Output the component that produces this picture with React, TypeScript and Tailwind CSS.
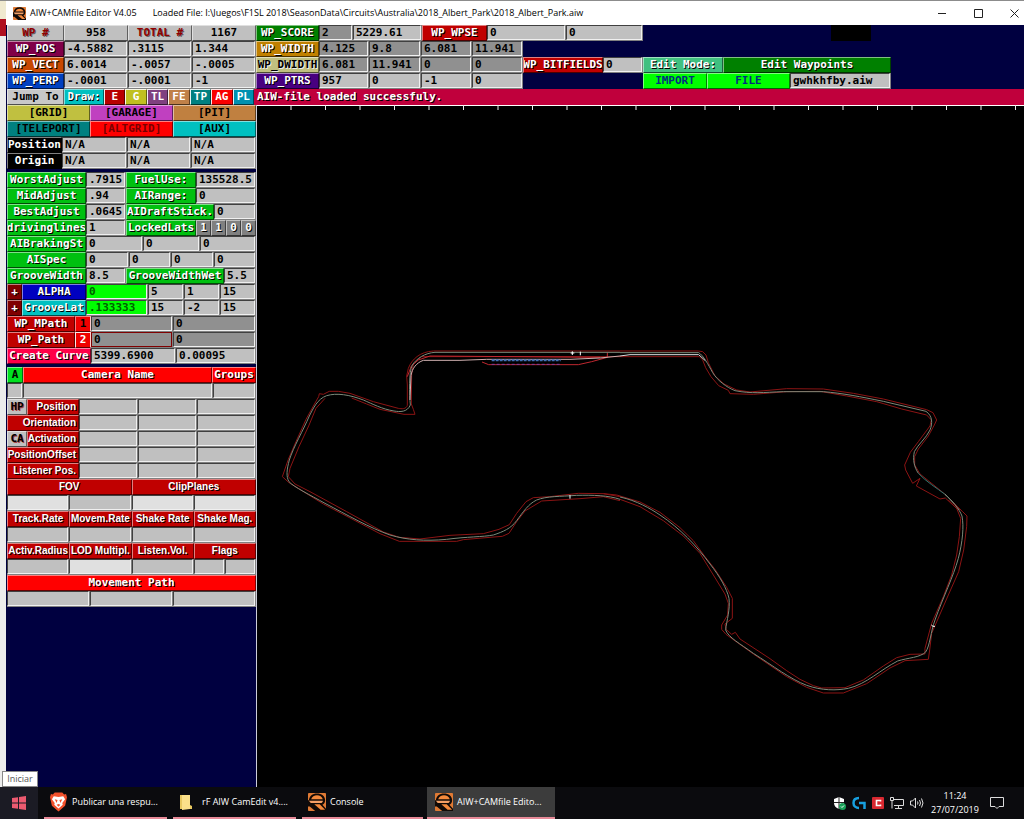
import { useId } from "react";
import { clsx } from "clsx";

const mono = "font-['DejaVu_Sans_Mono','Liberation_Mono',monospace] text-[11px] leading-[14px] font-bold";
const system = "font-['Open_Sans','Noto_Sans',sans-serif] text-[9px]";
const shadow = "[text-shadow:1px_1px_0_#000]";

type FieldProps = { w: string; value?: string; name: string; id?: string; tone?: string };

function Field({ w, value = "", name, id, tone = "bg-[#c0c0c0] text-black" }: FieldProps) {
  return (
    <div className={clsx(w, "h-4 shrink-0 bg-[#808080] pb-px pr-px")}>
      <input
        id={id}
        aria-label={name}
        defaultValue={value}
        className={clsx(
          mono,
          tone,
          "block h-[15px] w-full min-w-0 border border-t-[#404040] border-l-[#404040] border-r-[#f0f0f0] border-b-[#f0f0f0] pl-[2px] outline-none"
        )}
      />
    </div>
  );
}

const tagBase =
  "flex h-4 shrink-0 items-center justify-center overflow-hidden whitespace-nowrap border border-t-white/50 border-l-white/50 border-r-black/50 border-b-black/60";

function Tag({ className, children, htmlFor }: { className: string; children?: string; htmlFor?: string }) {
  return (
    <label htmlFor={htmlFor} className={clsx(tagBase, className)}>
      {children}
    </label>
  );
}

function Btn({ className, children, label }: { className: string; children?: string; label?: string }) {
  return (
    <button type="button" aria-label={label} className={clsx(tagBase, className)}>
      {children}
    </button>
  );
}

type Cell = { w: string; value?: string; tone?: string };

// a caption followed by its value boxes
function Values({ name, tag, cells }: { name: string; tag: string; cells: Cell[] }) {
  const id = useId();
  return (
    <>
      <Tag className={tag} htmlFor={id}>
        {name}
      </Tag>
      {cells.map((c, i) => (
        <Field key={i} id={i === 0 ? id : undefined} name={i === 0 ? name : `${name} ${i + 1}`} {...c} />
      ))}
    </>
  );
}

function Row({ children }: { children: React.ReactNode }) {
  return <div className="flex h-4">{children}</div>;
}

const white = `text-white ${shadow}`;
const green = `bg-[#00c010] ${white}`;
const red = `bg-[#c00000] ${white}`;
const dark = "bg-[#909090] text-black";
const lime = "bg-[#00ff00] text-[#006000]";
const arial = "font-['Liberation_Sans',sans-serif] text-[10px] leading-[14px] font-bold";

function Logo({ className }: { className: string }) {
  return (
    <svg viewBox="0 0 20 20" className={className} aria-hidden="true">
      <rect width="20" height="20" rx="1" fill="#e07a34" />
      <path d="M10 .5c5 0 9 3 9 7.500 0 2.500-1 4-3 5l4 4.500V20H8L2 15H0V8h1C1.500 3.500 5 .5 10 .5z" fill="#120a06" />
      <path d="M3.500 7C4.500 4 7 2.500 10 2.500S15.500 4 16.500 7z" fill="#f58a3c" />
      <path d="M1 8.500h15.500c0 1.200-.5 2-1.500 2.500H3z" fill="#f5a066" />
      <path d="M7 12.500h6l6 6h-5z" fill="#f58a3c" />
    </svg>
  );
}

function TitleBar() {
  const btn = "flex h-6 w-9 items-center justify-center";
  return (
    <header className={clsx(system, "flex h-[25px] items-center border-t border-[#8c8c8c] bg-white pl-[7px] text-black")}>
      <Logo className="h-[13px] w-[13px]" />
      <h1 className="ml-1 whitespace-nowrap">AIW+CAMfile Editor V4.05</h1>
      <span className="ml-4 flex-1 truncate">
        Loaded File: I:\Juegos\F1SL 2018\SeasonData\Circuits\Australia\2018_Albert_Park\2018_Albert_Park.aiw
      </span>
      <div className="-mr-2 flex">
        <button type="button" aria-label="Minimize" className={btn}>
          <svg width="9" height="9" stroke="#222" fill="none"><path d="M0 4.500h8" /></svg>
        </button>
        <button type="button" aria-label="Maximize" className={btn}>
          <svg width="9" height="9" stroke="#222" fill="none"><path d="M.5.5h8v8h-8z" /></svg>
        </button>
        <button type="button" aria-label="Close" className={btn}>
          <svg width="9" height="9" stroke="#222" fill="none"><path d="M.5.5l8 8m0-8l-8 8" /></svg>
        </button>
      </div>
    </header>
  );
}

const layers = [
  { name: "E", tone: "bg-[#b80000]" },
  { name: "G", tone: "bg-[#c0c020]" },
  { name: "TL", tone: "bg-[#804080]" },
  { name: "FE", tone: "bg-[#c08048]" },
  { name: "TP", tone: "bg-[#008080]" },
  { name: "AG", tone: "bg-[#f80000]" },
  { name: "PL", tone: "bg-[#0090b0]" },
];

function Toolbar() {
  const w3 = (a: string, b: string, c: string) => [
    { w: "w-16", value: a },
    { w: "w-16", value: b },
    { w: "w-16", value: c },
  ];
  const w4 = (tone: string | undefined, vals: string[]) =>
    vals.map((value, i) => ({ w: i === 0 ? "w-[50px]" : i === 1 ? "w-[52px]" : "w-[51px]", value, tone }));
  return (
    <section aria-label="Waypoint" className={clsx(mono, "overflow-hidden bg-[#000040] pl-px")}>
      <Row>
        <Tag className="w-[57px] bg-[#c0c0c0] text-[#900000] [text-shadow:1px_1px_0_#666]">WP #</Tag>
        <output aria-label="Waypoint number" className={clsx(tagBase, "w-16 bg-[#c0c0c0] text-black")}>958</output>
        <Tag className="w-16 bg-[#c0c0c0] text-[#900000] [text-shadow:1px_1px_0_#666]">TOTAL #</Tag>
        <output aria-label="Total" className={clsx(tagBase, "w-16 bg-[#c0c0c0] text-black")}>1167</output>
        <Values name="WP_SCORE" tag={`w-[63px] bg-[#008000] ${white}`} cells={[{ w: "w-[34px]", value: "2", tone: dark }, { w: "w-[69px]", value: "5229.61" }]} />
        <Values name="WP_WPSE" tag={`w-[65px] ${red}`} cells={[{ w: "w-[79px]", value: "0" }, { w: "w-[77px]", value: "0" }]} />
        <div className="ml-[188px] h-4 w-10 bg-black" />
      </Row>
      <Row>
        <Values name="WP_POS" tag={`w-[57px] bg-[#800048] ${white}`} cells={w3("-4.5882", ".3115", "1.344")} />
        <Values name="WP_WIDTH" tag={`w-[63px] bg-[#c08000] ${white}`} cells={w4(dark, ["4.125", "9.8", "6.081", "11.941"])} />
      </Row>
      <Row>
        <Values name="WP_VECT" tag={`w-[57px] bg-[#c84800] ${white}`} cells={w3("6.0014", "-.0057", "-.0005")} />
        <Values name="WP_DWIDTH" tag="w-[63px] bg-[#c0c080] text-black [text-shadow:1px_1px_0_#eee]" cells={w4(dark, ["6.081", "11.941", "0", "0"])} />
        <Values name="WP_BITFIELDS" tag={`w-20 ${red}`} cells={[{ w: "w-10", value: "0" }]} />
        <Tag className={`w-20 bg-[#40c080] ${white}`}>Edit Mode:</Tag>
        <Btn className={`w-[168px] bg-[#008000] ${white}`}>Edit Waypoints</Btn>
      </Row>
      <Row>
        <Values name="WP_PERP" tag={`w-[57px] bg-[#0040c0] ${white}`} cells={w3("-.0001", "-.0001", "-1")} />
        <Values name="WP_PTRS" tag={`w-[63px] bg-[#480080] ${white}`} cells={w4(undefined, ["957", "0", "-1", "0"])} />
        <div className="w-[120px] shrink-0" />
        <Btn className="w-16 bg-[#00ff00] text-[#003080]">IMPORT</Btn>
        <Btn className="w-[83px] bg-[#00ff00] text-[#003080]">FILE</Btn>
        <Field w="w-[101px]" name="Import file name" value="gwhkhfby.aiw" />
      </Row>
      <Row>
        <Btn className="w-[57px] bg-[#c8c8c8] text-black">Jump To</Btn>
        <Tag className={`w-10 bg-[#00c0c0] ${white}`}>Draw:</Tag>
        <div className="grid w-[150px] grid-cols-7">
          {layers.map((l) => (
            <Btn key={l.name} className={clsx("border-t-white/90 border-l-white/90 text-white", l.tone)}>
              {l.name}
            </Btn>
          ))}
        </div>
        <p role="status" className={clsx("flex flex-1 items-center bg-[#c0003c] pl-[3px]", white)}>
          AIW-file loaded successfuly.
        </p>
      </Row>
    </section>
  );
}

const views = [
  { name: "[GRID]", tone: "bg-[#c0c040]" },
  { name: "[GARAGE]", tone: "bg-[#c040c0]" },
  { name: "[PIT]", tone: "bg-[#c08040]" },
  { name: "[TELEPORT]", tone: "bg-[#008080]" },
  { name: "[ALTGRID]", tone: "bg-[#ff0000] text-[#780000]" },
  { name: "[AUX]", tone: "bg-[#00c0c0]" },
];

const thirds = (value = ""): Cell[] => [
  { w: "w-[65px]", value },
  { w: "w-16", value },
  { w: "w-[65px]", value },
];

const fourths = (...tones: string[]) => (
  <div className="grid h-4 grid-cols-4">
    {tones.map((tone, i) => (
      <Field key={i} w="w-full" name={`Camera value ${i + 1}`} tone={tone} />
    ))}
  </div>
);

const light = "bg-[#e0e0e0]";
const mid = "bg-[#c0c0c0]";

function Captions({ names }: { names: string[] }) {
  return (
    <div className={clsx("grid h-4", names.length === 2 ? "grid-cols-2" : "grid-cols-4", arial)}>
      {names.map((n) => (
        <Tag key={n} className={red}>
          {n}
        </Tag>
      ))}
    </div>
  );
}

function CameraRow({ name, button }: { name: string; button?: string }) {
  return (
    <Row>
      {button && <Btn className="w-5 bg-[#c0c0c0] text-black [text-shadow:1px_1px_0_#a44]">{button}</Btn>}
      <Values
        name={name}
        tag={clsx(arial, red, button ? "w-[52px]" : "w-[72px]", "justify-end! pr-[2px]")}
        cells={[{ w: "w-[59px]" }, { w: "w-[59px]" }, { w: "w-[59px]" }]}
      />
    </Row>
  );
}

function Sidebar() {
  const left = `w-[79px] ${green}`;
  return (
    <aside className={clsx(mono, "w-[251px] shrink-0 border-r border-white/80 bg-[#000040] pl-px")}>
      <div className="grid grid-cols-3">
        {views.map((v) => (
          <Btn key={v.name} className={v.tone}>
            {v.name}
          </Btn>
        ))}
      </div>
      <Row><Values name="Position" tag={`w-[55px] bg-black ${white}`} cells={thirds("N/A")} /></Row>
      <Row><Values name="Origin" tag={`w-[55px] bg-black ${white}`} cells={thirds("N/A")} /></Row>

      <div className="pt-[3px]">
        <Row>
          <Values name="WorstAdjust" tag={left} cells={[{ w: "w-10", value: ".7915" }]} />
          <Values name="FuelUse:" tag={`w-[70px] ${green}`} cells={[{ w: "w-[60px]", value: "135528.5" }]} />
        </Row>
        <Row>
          <Values name="MidAdjust" tag={left} cells={[{ w: "w-10", value: ".94" }]} />
          <Values name="AIRange:" tag={`w-[70px] ${green}`} cells={[{ w: "w-[60px]", value: "0" }]} />
        </Row>
        <Row>
          <Values name="BestAdjust" tag={left} cells={[{ w: "w-10", value: ".0645" }]} />
          <Values name="AIDraftStick." tag={`w-[88px] ${green}`} cells={[{ w: "w-[42px]", value: "0" }]} />
        </Row>
        <Row>
          <Values name="drivinglines" tag={left} cells={[{ w: "w-10", value: "1" }]} />
          <Tag className={`w-[70px] ${green}`}>LockedLats</Tag>
          {["1", "1", "0", "0"].map((v, i) => (
            <Btn key={i} label={`Locked lat ${i + 1}: ${v}`} className={`w-[15px] bg-[#808080] ${white}`}>
              {v}
            </Btn>
          ))}
        </Row>
        <Row><Values name="AIBrakingSt" tag={left} cells={[{ w: "w-[57px]", value: "0" }, { w: "w-[57px]", value: "0" }, { w: "w-14", value: "0" }]} /></Row>
        <Row><Values name="AISpec" tag={left} cells={[{ w: "w-[43px]", value: "0" }, { w: "w-[42px]", value: "0" }, { w: "w-[43px]", value: "0" }, { w: "w-[42px]", value: "0" }]} /></Row>
        <Row>
          <Values name="GrooveWidth" tag={left} cells={[{ w: "w-10", value: "8.5" }]} />
          <Values name="GrooveWidthWet" tag={`w-[98px] ${green}`} cells={[{ w: "w-8", value: "5.5" }]} />
        </Row>
        <Row>
          <Btn label="Increase alpha" className={`w-[15px] bg-[#800000] ${white}`}>+</Btn>
          <Values name="ALPHA" tag={`w-16 bg-[#0000c0] ${white}`} cells={[{ w: "w-[62px]", value: "0", tone: lime }, { w: "w-9", value: "5" }, { w: "w-9", value: "1" }, { w: "w-9", value: "15" }]} />
        </Row>
        <Row>
          <Btn label="Increase groove" className={`w-[15px] bg-[#800000] ${white}`}>+</Btn>
          <Values name="GrooveLat" tag={`w-16 bg-[#00c0c0] ${white}`} cells={[{ w: "w-[62px]", value: ".133333", tone: lime }, { w: "w-9", value: "15" }, { w: "w-9", value: "-2" }, { w: "w-9", value: "15" }]} />
        </Row>
        {["WP_MPath", "WP_Path"].map((n, i) => (
          <Row key={n}>
            <Tag className={`w-[68px] ${red}`} htmlFor={n}>{n}</Tag>
            <Btn label={`${n} ${i + 1}`} className={clsx("w-4 border-r-white/80 bg-[#f00000]", i === 0 ? "text-black" : "border-l-white/90 border-t-white/90 text-white")}>{`${i + 1}`}</Btn>
            <Field w="w-[82px]" id={n} name={n} value="0" tone={i === 0 ? dark : "bg-[#909090] text-black border-[#800000]!"} />
            <Field w="w-[83px]" name={`${n} end`} value="0" tone={dark} />
          </Row>
        ))}
        <Row>
          <Btn className={`w-[84px] bg-[#ff0048] ${white}`}>Create Curve</Btn>
          <Field w="w-[85px]" name="Curve length" value="5399.6900" />
          <Field w="w-20" name="Curve step" value="0.00095" />
        </Row>
      </div>

      <div className="pt-[3px]">
        <Row>
          <Btn label="Add camera" className="w-4 bg-[#00e020] text-black">A</Btn>
          <Tag className={`w-[189px] bg-[#ff0000] ${white}`} htmlFor="camera-name">Camera Name</Tag>
          <Tag className={`w-11 bg-[#ff0000] ${white}`} htmlFor="camera-groups">Groups</Tag>
        </Row>
        <Row>
          <Field w="w-4" name="Camera index" />
          <Field w="w-[190px]" id="camera-name" name="Camera Name" />
          <Field w="w-[43px]" id="camera-groups" name="Groups" />
        </Row>
        <CameraRow name="Position" button="HP" />
        <CameraRow name="Orientation" />
        <CameraRow name="Activation" button="CA" />
        <CameraRow name="PositionOffset" />
        <CameraRow name="Listener Pos." />
        <Captions names={["FOV", "ClipPlanes"]} />
        {fourths(light, mid, light, light)}
        <Captions names={["Track.Rate", "Movem.Rate", "Shake Rate", "Shake Mag."]} />
        {fourths(mid, mid, mid, mid)}
        <Captions names={["Activ.Radius", "LOD Multipl.", "Listen.Vol.", "Flags"]} />
        <div className="grid h-4 grid-cols-8">
          <Field w="col-span-2" name="Activ.Radius" />
          <Field w="col-span-2" name="LOD Multipl." tone={light} />
          <Field w="col-span-2" name="Listen.Vol." />
          <Field w="w-full" name="Flags" />
          <Field w="w-full" name="Flags 2" />
        </div>
        <Tag className={`bg-[#ff0000] ${white}`}>Movement Path</Tag>
        <div className="grid h-4 grid-cols-3">
          <Field w="w-full" name="Path x" />
          <Field w="w-full" name="Path y" />
          <Field w="w-full" name="Path z" />
        </div>
      </div>
    </aside>
  );
}

const line = "[&_path]:[vector-effect:non-scaling-stroke]";

function TrackMap() {
  const ticks = Array.from({ length: 22 }, (_, i) => 291 + i * 34.5);
  return (
    <main className="min-w-0 flex-1 bg-black">
      <svg viewBox="257 105 767 682" className={clsx("block w-full", line)} fill="none" role="img" aria-label="Track map">
        <path d="M257 105h767" stroke="#fff" strokeWidth="2" />
        {ticks.map((x) => (
          <path key={x} d={`M${x} 105v5`} stroke="#eee" />
        ))}

        {/* west side, drawn at three units per pixel */}
        <g transform="translate(270 330) scale(.33333)" strokeLinejoin="round">
          <g stroke="#8c1414">
            <path d="M1050 63H490C450 65 425 88 415 115L410 138 412 165V226C408 238 395 237 385 235L310 215 240 190 205 184H178L160 193 148 191 146 200 130 228 108 268 78 335 55 388 37 440 57 458 160 522 330 611 388 634H560L580 629 660 622 697 619 717 610 740 575 765 543 815 513 930 506 1000 500 1050 512" />
            <path d="M1050 80H455L430 102 425 132 424 222 430 238 435 253H402L330 238 290 222 245 204M165 205L138 235 116 288 87 350 60 415 55 440 75 462 120 485 230 545 340 606 388 622 450 627 540 616 640 611 687 598 718 584 740 550 768 515 790 503 840 500 925 490 1000 491 1050 500" />
            <path d="M412 140L424 108 445 90 480 78 990 82M636 96L656 104 925 104 965 95 1012 82V67" stroke="#c02830" />
          </g>
          <path d="M1050 67H495C465 69 440 85 427 105 416 125 418 195 421 225 412 247 390 246 372 243 335 237 308 222 280 210 238 194 200 188 170 197 142 207 130 235 118 258 100 300 70 352 58 390 50 420 48 440 57 455 70 470 120 495 165 520 230 554 300 594 360 615 410 630 465 634 530 628 590 620 640 621 670 615 700 605 722 596 740 572 760 545 775 522 800 510 830 498 870 500 920 496 970 495 1015 496 1050 508" stroke="#7c8a7a" />
          <path d="M1050 78L990 84 900 88H650L570 91H460C440 98 426 115 423 137L420 210" stroke="#d0b0b0" />
          <path d="M665 91H872" stroke="#4070b8" strokeWidth="2" strokeDasharray="3 1" />
          <path d="M665 103H872" stroke="#8040a0" strokeDasharray="3 2" />
          <path d="M902 69h11M907 64v11M931 65v11M900 495v11" stroke="#fff" />
        </g>

        {/* north-east side */}
        <g transform="translate(600 330) scale(.33333)" strokeLinejoin="round">
          <g stroke="#8c1414">
            <path d="M60 63H295L308 65 318 75 325 98 345 138 372 162 410 180 450 186 560 176 670 177 760 190 850 207 980 239 999 248 1010 270 1003 285 985 318 955 357 944 380V405L960 432 1038 495 1082 540" />
            <path d="M60 80H298L308 90 317 113 333 140 356 167 385 181 390 191 460 193 560 185 660 184 740 198 830 215 905 237 980 255 994 270 990 288 955 335 931 367 914 405 917 420 938 460 960 445 949 468 1020 507 1036 504 1075 540" />
          </g>
          <path d="M60 68H296C310 76 325 104 338 128 354 153 380 172 405 182 455 192 490 187 550 185H670C730 190 780 200 850 214L978 244C998 258 998 280 990 300 978 325 955 342 943 365 938 390 942 410 955 430" stroke="#7c8a7a" />
          <path d="M60 78L90 74H296L316 92" stroke="#dddddd" />
          <path d="M955 430C980 456 1010 474 1035 493" stroke="#307870" />
          <path d="M1035 493C1052 508 1065 525 1078 540" stroke="#7c8a7a" />
        </g>

        {/* south-east side */}
        <g transform="translate(600 480) scale(.33333)" strokeLinejoin="round">
          <g stroke="#8c1414">
            <path d="M10 41L50 45 120 66 180 97 240 143 280 182 315 230 345 268 380 322 397 355V415L375 432 378 448 395 463 406 457 420 477 510 536 560 572 600 598 640 617 665 624 735 623 790 600 850 558 890 533 930 523 975 522 975 505 995 430 1030 350 1055 285 1070 225 1078 170 1082 115 1070 85 1045 60" />
            <path d="M60 58L120 80 190 122 250 168 300 220 340 285 375 342 385 370 383 405 365 435V448L378 463 460 522 560 590 620 622 670 639H730L800 611 870 564 915 542 985 538 989 510 995 460 1045 345 1076 275 1091 210 1100 140 1101 108 1088 95 1060 70" />
          </g>
          <path d="M60 51C110 62 150 85 180 105 240 145 290 198 330 252 360 290 380 325 387 355 391 390 380 420 377 450 385 472 420 491 460 520 520 558 570 597 620 616 665 632 710 632 745 625 800 612 840 570 893 543 925 533 960 533 977 516 990 497 992 455 1005 420 1030 350 1060 290 1075 235 1088 185 1092 140 1086 108 1077 85 1057 63 1035 43" stroke="#7c8a7a" />
          <path d="M994 435l5 4h6" stroke="#fff" />
        </g>
      </svg>
    </main>
  );
}

function Brave() {
  return (
    <svg viewBox="0 0 18 20" className="h-5 w-[17px]" aria-hidden="true">
      <path d="M5 0h8l2 2 2-.5L18 5l-2 9-7 6-7-6L0 5l1-3.500L3 2z" fill="#f2512c" />
      <path d="M4 4l5 .8L14 4l2 3-3 4 .5 2L9 17l-4.500-4L5 11 2 7z" fill="#fff" />
      <path d="M5 7l3 1-1 3zM13 7l-3 1 1 3zM7 13l2-1 2 1-2 2z" fill="#f2512c" />
    </svg>
  );
}

function Folder() {
  return (
    <svg viewBox="0 0 12 16" className="h-4 w-3" aria-hidden="true">
      <path d="M0 1h10v10l2 1v3H0z" fill="#e8c860" />
      <path d="M2 1h8v14l-8 1z" fill="#fbe08a" />
    </svg>
  );
}

const tasks = [
  { name: "Publicar una respu...", icon: <Brave />, box: "ml-1.5 w-[123px] pl-1.5" },
  { name: "rF AIW CamEdit v4....", icon: <Folder />, box: "ml-1.5 w-[123px] pl-[7px]" },
  { name: "Console", icon: <Logo className="h-[18px] w-[18px]" />, box: "ml-1.5 w-[121px] pl-1.5" },
  { name: "AIW+CAMfile Edito...", icon: <Logo className="h-[18px] w-[18px]" />, box: "ml-1 w-32 pl-2 bg-[#3c3c3c]" },
];

function Taskbar() {
  return (
    <footer className={clsx(system, "relative flex h-8 bg-[#0b0b0e] text-white")}>
      <div role="tooltip" className="absolute -top-4 left-0.5 flex h-4 w-9 items-center justify-center border border-[#888] bg-white text-[#555]">
        Iniciar
      </div>
      <button type="button" aria-label="Iniciar" className="flex w-[38px] items-center justify-center bg-[#1b1b24]">
        <svg viewBox="0 0 14 14" className="h-3.5 w-3.5" fill="#ec5a70">
          <path d="M0 2l6-.8v5.300H0zM7 1l7-1v6.500H7zM0 7.500h6v5.300L0 12zM7 7.500h7V14l-7-1z" />
        </svg>
      </button>
      {tasks.map((t) => (
        <button
          key={t.name}
          type="button"
          className={clsx("flex shrink-0 items-center gap-1 border-b-2 border-[#e88a98] whitespace-nowrap", t.box)}
        >
          <span className="flex w-[18px]">{t.icon}</span>
          {t.name}
        </button>
      ))}
      <div className="ml-auto flex items-center gap-[6px] pr-5">
        <svg viewBox="0 0 13 13" className="h-[13px] w-[13px]" role="img" aria-label="Security">
          <path d="M6 0l5 2v4c0 3-2 5-5 6-3-1-5-3-5-6V2z" fill="#fff" />
          <path d="M6 0v12M1 5.500h10" stroke="#222" />
          <circle cx="9.500" cy="9.500" r="3.500" fill="#18a058" />
          <path d="M8 9.500l1 1 2-2" stroke="#fff" fill="none" />
        </svg>
        <svg viewBox="0 0 14 14" className="h-3.5 w-3.5" role="img" aria-label="Gaming software" fill="none" stroke="#18a0e0" strokeWidth="2.500">
          <path d="M7 2C3 2 1.500 4 1.500 7S4 12 7 12M7 7h5.500v6" />
        </svg>
        <svg viewBox="0 0 12 12" className="h-3 w-3" role="img" aria-label="Antivirus">
          <rect width="12" height="12" rx="1" fill="#d82830" />
          <path d="M8.500 4.500V3.500h-4v5h4v-1" fill="none" stroke="#fff" strokeWidth="1.600" />
        </svg>
        <svg viewBox="0 0 14 12" className="h-3 w-3.5" role="img" aria-label="Network" fill="none" stroke="#ddd">
          <path d="M4 2.500h9.500v6H4M8.500 8.500v2.500M5 11.500h7M.5.5h3v3h-3zM2 3.500v8" />
        </svg>
        <svg viewBox="0 0 14 12" className="h-3 w-3.5" role="img" aria-label="Volume" fill="none" stroke="#ddd">
          <path d="M.5 4v4h2l3 3V1l-3 3zM7.500 4.500q1 1.500 0 3M9.500 3q2 3 0 6M11.500 1.500q3 4.500 0 9" />
        </svg>
        <time className="w-[50px] text-center leading-[14px]">
          11:24
          <br />
          27/07/2019
        </time>
        <button type="button" aria-label="Notifications" className="ml-1">
          <svg viewBox="0 0 14 14" className="h-3.5 w-3.5" fill="none" stroke="#ddd">
            <path d="M.5 1.500h13v9H9l-2 2-2-2H.5z" />
          </svg>
        </button>
      </div>
    </footer>
  );
}

export default function App() {
  return (
    <div className="flex min-h-screen flex-col bg-black">
      <div className="flex flex-1">
        <div className="w-1.5 shrink-0 border-t border-[#8c8c8c] bg-[#ececec]">
          <div className="h-[18px] bg-[#f0ead0]" />
          <div className="h-[17px] bg-[#b01020]" />
        </div>
        <div className="flex min-w-0 flex-1 flex-col">
          <TitleBar />
          <Toolbar />
          <div className="flex flex-1">
            <Sidebar />
            <TrackMap />
          </div>
        </div>
      </div>
      <Taskbar />
    </div>
  );
}
